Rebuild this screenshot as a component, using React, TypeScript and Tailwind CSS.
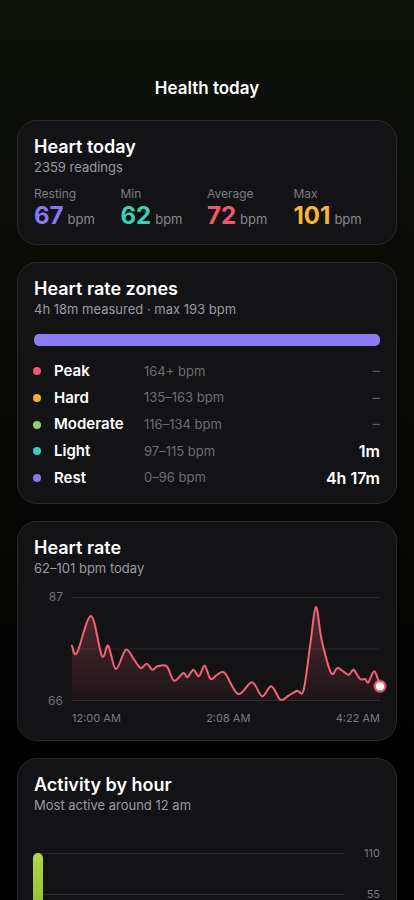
import React from 'react';

type Pt = [number, number];

// heart-rate trace, in chart coordinates (309 x 104, 87 bpm at top, 66 at bottom)
const trace: Pt[] = [
  [0, 48.7], [5, 56], [19, 19], [30, 59], [36.3, 48.7], [44, 72], [54, 52.7],
  [62.3, 62.7], [69, 71], [75, 66.7], [80.7, 72.7], [85.7, 69.3], [95, 69.3],
  [102.3, 83.7], [111.7, 76], [115.7, 80.3], [121.7, 72.7], [127.3, 79.3],
  [133, 68.7], [139, 82], [145.7, 77.7], [153.3, 76], [166.7, 97], [180.7, 85.3],
  [190.7, 99.3], [200, 89.3], [209, 102.7], [217.3, 98.7], [225.7, 93.7],
  [232.3, 93.3], [239, 47.7], [244.7, 10], [250.7, 44.3], [260, 76], [266.7, 71],
  [277.3, 77.7], [282.3, 72.7], [289, 82], [294, 82], [297.3, 85.3],
  [303.3, 74.3], [309, 89.3],
];

function smoothPath(pts: Pt[]) {
  let d = `M${pts[0][0]},${pts[0][1]}`;
  for (let i = 0; i < pts.length - 1; i++) {
    const p0 = pts[i - 1] || pts[i];
    const p1 = pts[i];
    const p2 = pts[i + 1];
    const p3 = pts[i + 2] || p2;
    const c1x = p1[0] + (p2[0] - p0[0]) / 6;
    const c1y = p1[1] + (p2[1] - p0[1]) / 6;
    const c2x = p2[0] - (p3[0] - p1[0]) / 6;
    const c2y = p2[1] - (p3[1] - p1[1]) / 6;
    d += ` C${c1x.toFixed(1)},${c1y.toFixed(1)} ${c2x.toFixed(1)},${c2y.toFixed(1)} ${p2[0]},${p2[1]}`;
  }
  return d;
}

const stats = [
  { label: 'Resting', value: '67', color: 'text-[#8878f2]' },
  { label: 'Min', value: '62', color: 'text-[#38d4b3]' },
  { label: 'Average', value: '72', color: 'text-[#f0596d]' },
  { label: 'Max', value: '101', color: 'text-[#f8b531]' },
];

const zones = [
  { name: 'Peak', range: '164+ bpm', time: '–', dot: 'bg-[#f0596d]' },
  { name: 'Hard', range: '135–163 bpm', time: '–', dot: 'bg-[#f8b031]' },
  { name: 'Moderate', range: '116–134 bpm', time: '–', dot: 'bg-[#8fd467]' },
  { name: 'Light', range: '97–115 bpm', time: '1m', dot: 'bg-[#36d2b3]' },
  { name: 'Rest', range: '0–96 bpm', time: '4h 17m', dot: 'bg-[#8878f2]' },
];

const hourly = [110, 5, 3, 4, 2, 0, 0, 0, 0, 0, 0, 0, 0, 0, 0, 0, 0, 0, 0, 0, 0, 0, 0, 0];

function Card({ title, subtitle, children }: { title: string; subtitle: string; children: React.ReactNode }) {
  return (
    <div className="rounded-[20px] border border-[#29292d] bg-[#131316] px-4 pt-[15px]">
      <div className="text-[18px] leading-[22px] font-semibold text-white">{title}</div>
      <div className="text-[13px] leading-[18px] text-[#9a9aa1]">{subtitle}</div>
      {children}
    </div>
  );
}

function HeartRateChart() {
  const line = smoothPath(trace);
  const area = `${line} L309,104 L0,104 Z`;
  const last = trace[trace.length - 1];
  return (
    <div className="mt-[20px]">
      <div className="flex">
        <div className="w-[38px] h-[118px] -my-[7px] pr-[9px] flex flex-col justify-between items-end text-[12px] leading-[14px] text-[#6f6f75]">
          <span>87</span>
          <span>66</span>
        </div>
        <div className="flex-1 h-[104px]">
          <svg width="100%" height="104" viewBox="0 0 309 104" preserveAspectRatio="none" className="overflow-visible">
            <defs>
              <linearGradient id="hrFill" x1="0" y1="0" x2="0" y2="1">
                <stop offset="0%" stopColor="#f0596d" stopOpacity="0.3" />
                <stop offset="100%" stopColor="#f0596d" stopOpacity="0.04" />
              </linearGradient>
            </defs>
            <line x1="0" y1="0.5" x2="309" y2="0.5" stroke="#2a2a2f" strokeWidth="1" />
            <line x1="0" y1="52" x2="309" y2="52" stroke="#2a2a2f" strokeWidth="1" />
            <line x1="0" y1="103.5" x2="309" y2="103.5" stroke="#2a2a2f" strokeWidth="1" />
            <path d={area} fill="url(#hrFill)" />
            <path d={line} fill="none" stroke="#f2637a" strokeWidth="2" strokeLinejoin="round" strokeLinecap="round" />
            <circle cx={last[0]} cy={last[1]} r="7" fill="#f0596d" opacity="0.35" />
            <circle cx={last[0]} cy={last[1]} r="5" fill="#fff" stroke="#f2637a" strokeWidth="2" />
          </svg>
        </div>
      </div>
      <div className="ml-[38px] mt-[10px] flex justify-between text-[11px] leading-[14px] text-[#7a7a80]">
        <span>12:00 AM</span>
        <span>2:08 AM</span>
        <span>4:22 AM</span>
      </div>
      <div className="h-[15px]" />
    </div>
  );
}

function ActivityChart() {
  return (
    <div className="mt-[39px] flex pb-4">
      <div className="relative flex-1 h-[82px]">
        <div className="h-full flex flex-col justify-between">
          <div className="border-t border-[#2a2a2f]" />
          <div className="border-t border-[#2a2a2f]" />
          <div className="border-t border-[#2a2a2f]" />
        </div>
        <div className="absolute inset-0 flex items-end gap-[3px] -ml-[1px]">
          {hourly.map((v, i) => (
            <div key={i} className="flex-1 flex justify-center items-end h-full">
              {v > 0 && (
                <div
                  className="w-[10px] rounded-t-full bg-gradient-to-b from-[#b3d648] to-[#86b12b]"
                  style={{ height: `${(v / 110) * 82}px` }}
                />
              )}
            </div>
          ))}
        </div>
      </div>
      <div className="w-[35px] h-[96px] -my-[7px] flex flex-col justify-between items-end text-[11px] leading-[14px] text-[#7a7a80]">
        <span>110</span>
        <span>55</span>
        <span>0</span>
      </div>
    </div>
  );
}

export default function App() {
  return (
    <div className="min-h-screen bg-black font-['Inter',sans-serif] antialiased">
      <div className="bg-gradient-to-b from-[#0f110b] via-[#070805] to-black px-[17px] pt-[77px]">
        <h1 className="text-center text-[17px] leading-[22px] font-semibold text-white">Health today</h1>
        <div className="mt-[21px] flex flex-col gap-[17px] pb-10">
          <Card title="Heart today" subtitle="2359 readings">
            <div className="mt-[10px] grid grid-cols-4 pb-[14px]">
              {stats.map((s) => (
                <div key={s.label}>
                  <div className="text-[12px] leading-[16px] text-[#7c7c83]">{s.label}</div>
                  <div className="flex items-baseline gap-[4px]">
                    <span className={`text-[24px] leading-[28px] font-bold ${s.color}`}>{s.value}</span>
                    <span className="text-[13px] text-[#88888e]">bpm</span>
                  </div>
                </div>
              ))}
            </div>
          </Card>

          <Card title="Heart rate zones" subtitle="4h 18m measured · max 193 bpm">
            <div className="mt-[16px] h-[12px] rounded-[5px] bg-[#8b7cf6]" />
            <div className="mt-[12px] pb-[12px]">
              {zones.map((z) => (
                <div key={z.name} className="flex items-center h-[26.7px]">
                  <div className="w-[110px] flex items-center">
                    <span className={`ml-[-1px] w-[8px] h-[8px] rounded-full ${z.dot}`} />
                    <span className="ml-[13px] text-[15px] font-semibold text-white">{z.name}</span>
                  </div>
                  <span className="flex-1 text-[13px] text-[#6d6d73]">{z.range}</span>
                  <span className={z.time === '–' ? 'text-[15px] text-[#55555b]' : 'text-[16px] font-semibold text-white'}>
                    {z.time}
                  </span>
                </div>
              ))}
            </div>
          </Card>

          <Card title="Heart rate" subtitle="62–101 bpm today">
            <HeartRateChart />
          </Card>

          <Card title="Activity by hour" subtitle="Most active around 12 am">
            <ActivityChart />
          </Card>
        </div>
      </div>
    </div>
  );
}
